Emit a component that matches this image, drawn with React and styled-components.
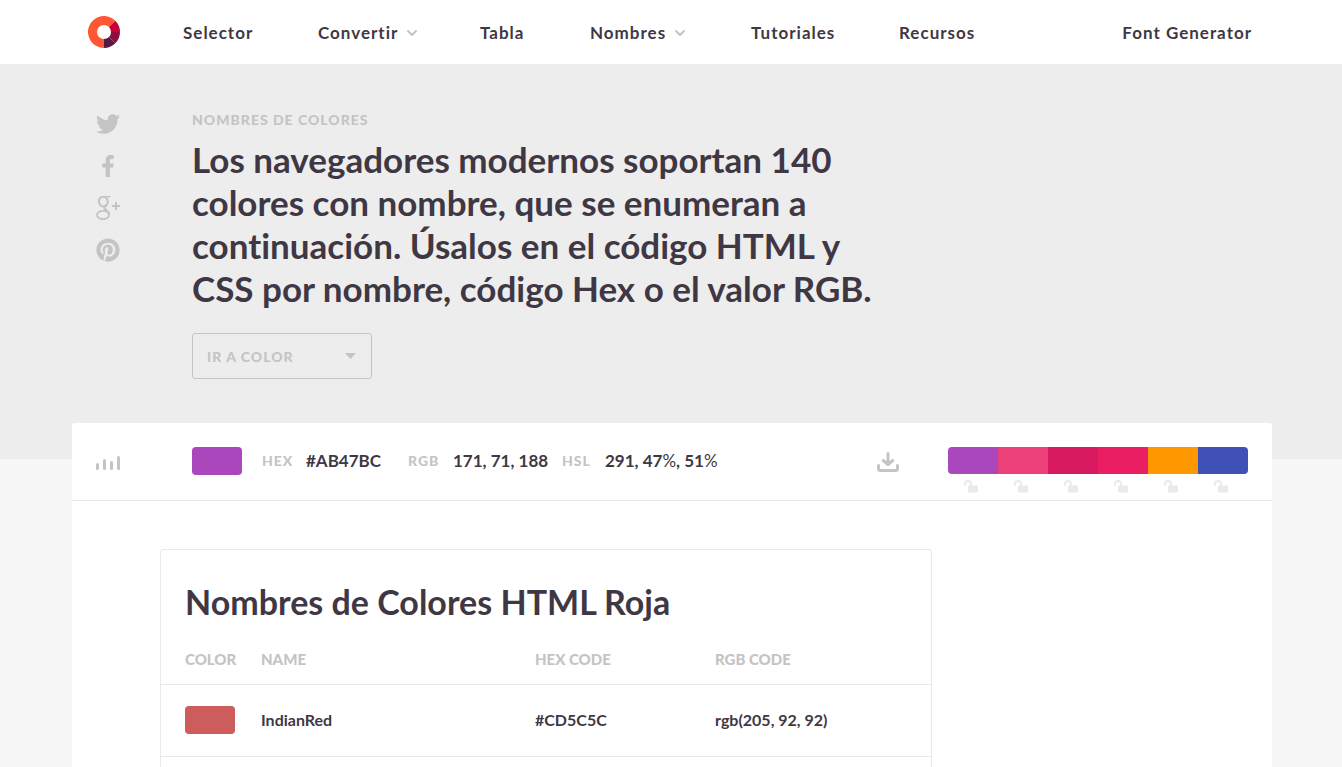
import React from "react";
import styled, { createGlobalStyle } from "styled-components";
import { FaTwitter, FaFacebookF, FaPinterest } from "react-icons/fa";

const ink = "#3f3844";
const muted = "#c4c4c4";
const line = "#e9e9e9";

const GlobalStyle = createGlobalStyle`
  *, *::before, *::after { box-sizing: border-box; }
  body {
    margin: 0;
    background: #f7f7f7;
    color: ${ink};
    font-family: Lato, "Open Sans", "Liberation Sans", sans-serif;
    font-weight: 700;
    font-variant-ligatures: none;
  }
  button, select { font: inherit; color: inherit; }
  button { border: 0; padding: 0; background: none; cursor: pointer; }
  svg { display: block; }
`;

const Page = styled.div`
  min-height: 100vh;
  display: flex;
  flex-direction: column;
`;

const Header = styled.header`
  display: flex;
  align-items: center;
  height: 64px;
  padding: 0 90px 0 88px;
  background: #fff;
`;

const LogoLink = styled.a`
  width: 95px;
  flex: none;
`;

const Nav = styled.nav`
  flex: 1;
  display: grid;
  grid-template-columns: 135px 162px 110px 161px 148px 1fr auto;
  align-items: center;
  padding-top: 2px;
`;

const NavLink = styled.a`
  display: flex;
  align-items: center;
  gap: 8px;
  color: ${ink};
  font-size: 17px;
  line-height: 24px;
  letter-spacing: 1px;
  text-decoration: none;
  white-space: nowrap;
`;

const Hero = styled.section`
  display: flex;
  min-height: 395px;
  padding: 46px 70px 80px 96px;
  background: #ededed;
`;

const Social = styled.div`
  display: flex;
  flex-direction: column;
  gap: 18px;
  width: 96px;
  padding-top: 2px;
  flex: none;
`;

const SocialLink = styled.a`
  display: flex;
  align-items: center;
  justify-content: center;
  width: 24px;
  height: 24px;
  color: ${muted};
`;

const Intro = styled.div`
  flex: 0 1 700px;
`;

const Eyebrow = styled.p`
  margin: 0;
  color: ${muted};
  font-size: 14px;
  line-height: 20px;
  letter-spacing: 1px;
  font-weight: 900;
  text-transform: uppercase;
`;

const Headline = styled.h1`
  margin: 8px 0 23px;
  font-size: 35px;
  line-height: 43px;
  font-weight: 700;
`;

const SelectBox = styled.label`
  display: flex;
  align-items: center;
  width: 180px;
  height: 46px;
  padding-right: 15px;
  border: 1px solid ${muted};
  border-radius: 3px;
  color: ${muted};
`;

const ColorSelect = styled.select`
  flex: 1;
  min-width: 0;
  height: 44px;
  padding: 0 0 0 14px;
  border: 0;
  appearance: none;
  background: none;
  font-size: 14px;
  font-weight: 900;
  letter-spacing: 1px;
`;

const Card = styled.main`
  flex: 1;
  display: flex;
  flex-direction: column;
  margin: -36px 70px 0 72px;
  border-radius: 3px 3px 0 0;
  background: #fff;
`;

const Toolbar = styled.div`
  display: flex;
  height: 78px;
  padding: 24px 24px 0;
  border-bottom: 1px solid ${line};
`;

const IconButton = styled.button`
  display: flex;
  align-items: flex-end;
  width: ${(p) => p.$width}px;
  height: 28px;
  flex: none;
  color: ${muted};
`;

const Swatch = styled.span`
  display: block;
  width: 50px;
  height: 28px;
  flex: none;
  border-radius: 4px;
  background: ${(p) => p.$color};
`;

const Values = styled.dl`
  flex: 1;
  display: grid;
  grid-template-columns: 44px 102px 45px 109px 43px auto;
  align-items: center;
  justify-content: start;
  height: 28px;
  margin: 0 0 0 20px;
  line-height: 28px;
  white-space: nowrap;
`;

const Term = styled.dt`
  color: ${muted};
  font-size: 14px;
  font-weight: 900;
  letter-spacing: 1px;
`;

const Value = styled.dd`
  margin: 0;
  font-size: 17px;
`;

const Percent = styled.span`
  font-weight: 400;
`;

const Palette = styled.ul`
  display: flex;
  margin: 0;
  padding: 0;
  list-style: none;
`;

const PaletteItem = styled.li`
  width: 50px;
  &:first-child button:first-child { border-radius: 4px 0 0 4px; }
  &:last-child button:first-child { border-radius: 0 4px 4px 0; }
`;

const PaletteColor = styled.button`
  display: block;
  width: 100%;
  height: 27px;
  background: ${(p) => p.$color};
`;

const LockButton = styled.button`
  display: block;
  margin: 6px 0 0 16px;
  color: #eaeaea;
`;

const Panel = styled.section`
  flex: 1;
  width: 772px;
  max-width: calc(100% - 88px);
  margin: 48px 0 0 88px;
  border: 1px solid ${line};
  border-bottom: 0;
  border-radius: 4px 4px 0 0;
`;

const PanelTitle = styled.h2`
  margin: 0;
  padding: 30px 24px 23px;
  font-size: 34px;
  line-height: 43px;
  font-weight: 700;
`;

const ColorTable = styled.table`
  width: 100%;
  table-layout: fixed;
  border-collapse: collapse;
  text-align: left;
`;

const HeadCell = styled.th`
  width: ${(p) => p.$width};
  height: 38px;
  padding: 0 0 15px ${(p) => (p.$first ? "24px" : "0")};
  border-bottom: 1px solid ${line};
  color: ${muted};
  font-size: 15px;
  line-height: 20px;
  font-weight: 900;
  vertical-align: bottom;
  white-space: nowrap;
`;

const Cell = styled.td`
  height: 72px;
  padding: 0 0 0 ${(p) => (p.$first ? "24px" : "0")};
  border-bottom: 1px solid ${line};
  font-size: 16px;
  line-height: 20px;
`;

const Logo = () => (
  <svg width="32" height="32" viewBox="0 0 32 32" aria-hidden="true">
    <path d="M16 16V32A16 16 0 1 1 27.3 4.7Z" fill="#ff5733" />
    <path d="M16 16 27.3 4.7A16 16 0 0 1 32 16Z" fill="#c70039" />
    <path d="M16 16H32A16 16 0 0 1 27.3 27.3Z" fill="#900c3f" />
    <path d="M16 16 27.3 27.3A16 16 0 0 1 16 32Z" fill="#581845" />
    <circle cx="16" cy="16" r="7" fill="#fff" />
  </svg>
);

const Chevron = () => (
  <svg width="12" height="8" viewBox="0 0 12 8" fill="none" stroke={muted} strokeWidth="2" strokeLinecap="round" strokeLinejoin="round" aria-hidden="true">
    <path d="M2 2 6 6 10 2" />
  </svg>
);

const GooglePlus = () => (
  <svg width="24" height="24" viewBox="0 0 24 24" fill="none" stroke="currentColor" aria-hidden="true">
    <ellipse cx="7.3" cy="5.6" rx="4.4" ry="4.9" strokeWidth="2.1" transform="rotate(-12 7.3 5.6)" />
    <path d="M7.5 .7H14.5" strokeWidth="1.4" />
    <path d="M10.2 9.6C7.2 11.4 7.8 12.6 10.2 14.2C12 15.4 13 16.4 13 18.2" strokeWidth="2.1" />
    <ellipse cx="7" cy="19" rx="6" ry="4.2" strokeWidth="1.8" />
    <path d="M20 6V14M16 10H24" strokeWidth="2" />
  </svg>
);

const Bars = () => (
  <svg width="24" height="20" viewBox="0 0 24 20" fill="currentColor" aria-hidden="true">
    <rect x="0" y="8" width="3" height="7" rx="1.5" />
    <rect x="7" y="4" width="3" height="11" rx="1.5" />
    <rect x="14" y="6" width="3" height="9" rx="1.5" />
    <rect x="21" y="1" width="3" height="14" rx="1.5" />
  </svg>
);

const Download = () => (
  <svg width="22" height="24" viewBox="0 0 22 24" fill="none" stroke="currentColor" strokeWidth="3" strokeLinecap="round" strokeLinejoin="round" aria-hidden="true">
    <path d="M11 2.5V13M6.2 9.5 11 13.6 15.8 9.5M1.5 14.5V17.5Q1.5 19.5 3.5 19.5H18.5Q20.5 19.5 20.5 17.5V14.5" />
  </svg>
);

const Lock = () => (
  <svg width="14" height="13" viewBox="0 0 14 13" aria-hidden="true">
    <path d="M1 5.5V4A3 3 0 0 1 7 4V6" fill="none" stroke="currentColor" strokeWidth="2" />
    <rect x="4" y="5.5" width="10" height="7" rx="1" fill="currentColor" />
  </svg>
);

const navItems = [
  { label: "Selector" },
  { label: "Convertir", menu: true },
  { label: "Tabla" },
  { label: "Nombres", menu: true },
  { label: "Tutoriales" },
  { label: "Recursos" },
  { label: "Font Generator" },
];

const socials = [
  { label: "Twitter", icon: <FaTwitter size={24} /> },
  { label: "Facebook", icon: <FaFacebookF size={22} /> },
  { label: "Google Plus", icon: <GooglePlus /> },
  { label: "Pinterest", icon: <FaPinterest size={24} /> },
];

const palette = ["#ab47bc", "#ec407a", "#d81b60", "#e91e63", "#ff9800", "#3f51b5"];

const colors = [{ name: "IndianRed", hex: "#CD5C5C", rgb: "rgb(205, 92, 92)" }];

export default function App() {
  return (
    <Page>
      <GlobalStyle />
      <Header>
        <LogoLink href="#" aria-label="Inicio"><Logo /></LogoLink>
        <Nav>
          {navItems.map((item) => (
            <NavLink key={item.label} href="#">
              {item.label}
              {item.menu && <Chevron />}
            </NavLink>
          ))}
        </Nav>
      </Header>
      <Hero>
        <Social>
          {socials.map((s) => (
            <SocialLink key={s.label} href="#" aria-label={s.label}>{s.icon}</SocialLink>
          ))}
        </Social>
        <Intro>
          <Eyebrow>Nombres de colores</Eyebrow>
          <Headline>
            Los navegadores modernos soportan 140 <br />
            colores con nombre, que se enumeran a <br />
            continuación. Úsalos en el código HTML y <br />
            CSS por nombre, código Hex o el valor RGB.
          </Headline>
          <SelectBox>
            <ColorSelect aria-label="Ir a color" defaultValue="">
              <option value="">IR A COLOR</option>
            </ColorSelect>
            <svg width="11" height="6" viewBox="0 0 11 6" fill="currentColor" aria-hidden="true">
              <path d="M0 0H11L5.5 6Z" />
            </svg>
          </SelectBox>
        </Intro>
      </Hero>
      <Card>
        <Toolbar>
          <IconButton $width={96} aria-label="Ajustes"><Bars /></IconButton>
          <Swatch $color="#ab47bc" />
          <Values>
            <Term>HEX</Term>
            <Value>#AB47BC</Value>
            <Term>RGB</Term>
            <Value>171, 71, 188</Value>
            <Term>HSL</Term>
            <Value>291, 47<Percent>%</Percent>, 51<Percent>%</Percent></Value>
          </Values>
          <IconButton $width={71} aria-label="Descargar"><Download /></IconButton>
          <Palette>
            {palette.map((color) => (
              <PaletteItem key={color}>
                <PaletteColor $color={color} aria-label={color} />
                <LockButton aria-label="Bloquear"><Lock /></LockButton>
              </PaletteItem>
            ))}
          </Palette>
        </Toolbar>
        <Panel>
          <PanelTitle>Nombres de Colores HTML Roja</PanelTitle>
          <ColorTable>
            <thead>
              <tr>
                <HeadCell $width="100px" $first>COLOR</HeadCell>
                <HeadCell $width="274px">NAME</HeadCell>
                <HeadCell $width="180px">HEX CODE</HeadCell>
                <HeadCell>RGB CODE</HeadCell>
              </tr>
            </thead>
            <tbody>
              {colors.map((c) => (
                <tr key={c.name}>
                  <Cell $first><Swatch $color={c.hex} /></Cell>
                  <Cell>{c.name}</Cell>
                  <Cell>{c.hex}</Cell>
                  <Cell>{c.rgb}</Cell>
                </tr>
              ))}
            </tbody>
          </ColorTable>
        </Panel>
      </Card>
    </Page>
  );
}
